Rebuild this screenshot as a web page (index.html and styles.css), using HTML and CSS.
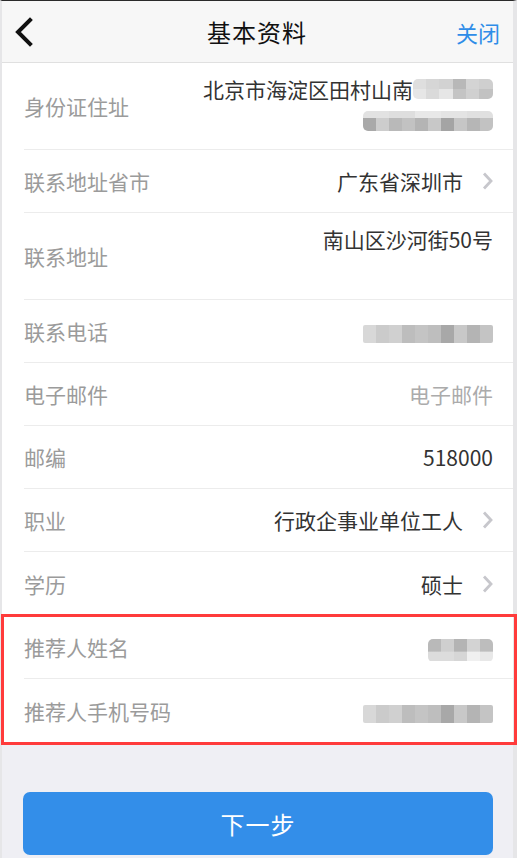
FILE: index.html
```html
<!DOCTYPE html>
<html lang="zh-CN">
<head>
    <meta charset="UTF-8" />
    <meta name="viewport" content="width=device-width, initial-scale=1.0"/>
    <title>基本资料</title>
    <link rel="stylesheet" href="styles.css">
</head>
<body>

<div class="screen">
    <header class="nav">
        <span class="nav-back">
            <svg width="20" height="30" viewBox="0 0 20 30">
                <path d="M16 3 L4 15 L16 27" fill="none" stroke="#111" stroke-width="4" stroke-linecap="square"/>
            </svg>
        </span>
        <h1 class="nav-title">基本资料</h1>
        <span class="nav-close">关闭</span>
    </header>

    <div class="form">
        <div class="row tall">
            <span class="label">身份证住址</span>
            <div class="value multi">
                <span class="line">北京市海淀区田村山南<i class="mosaic m-addr1"></i></span>
                <span class="line"><i class="mosaic m-addr2"></i></span>
            </div>
        </div>

        <div class="row">
            <span class="label">联系地址省市</span>
            <span class="value">广东省深圳市</span>
            <span class="chevron"></span>
        </div>

        <div class="row tall">
            <span class="label">联系地址</span>
            <div class="value multi">
                <span class="line">南山区沙河街50号</span>
            </div>
        </div>

        <div class="row">
            <span class="label">联系电话</span>
            <span class="value"><i class="mosaic m-phone"></i></span>
        </div>

        <div class="row">
            <span class="label">电子邮件</span>
            <span class="value placeholder">电子邮件</span>
        </div>

        <div class="row">
            <span class="label">邮编</span>
            <span class="value">518000</span>
        </div>

        <div class="row">
            <span class="label">职业</span>
            <span class="value">行政企事业单位工人</span>
            <span class="chevron"></span>
        </div>

        <div class="row last">
            <span class="label">学历</span>
            <span class="value">硕士</span>
            <span class="chevron"></span>
        </div>

        <!-- referrer fields, marked in red -->
        <div class="highlight">
            <div class="row">
                <span class="label">推荐人姓名</span>
                <span class="value"><i class="mosaic m-name"></i></span>
            </div>
            <div class="row last">
                <span class="label">推荐人手机号码</span>
                <span class="value"><i class="mosaic m-phone"></i></span>
            </div>
        </div>
    </div>

    <div class="footer">
        <button class="next-btn">下一步</button>
    </div>
</div>

</body>
</html>
```

FILE: styles.css
```css
* {
    box-sizing: border-box;
    font-family: "Noto Sans CJK SC", "Noto Sans", sans-serif;
}

body {
    margin: 0;
    background: #fff;
    overflow: hidden;
}

.screen {
    width: 517px;
    height: 858px;
    border-top: 1px solid #2a2a2a;
    border-left: 2px solid #e6e6e8;
    border-right: 4px solid #e6e6e8;
    background: #efeff4;
}

/* top bar */
.nav {
    height: 62px;
    display: flex;
    align-items: center;
    justify-content: space-between;
    padding: 0 13px 0 12px;
    background: #f7f7f7;
    border-bottom: 1px solid #e0e0e0;
}

.nav-back {
    width: 60px;
    display: flex;
    align-items: center;
}

.nav-back svg {
    display: block;
}

.nav-title {
    margin: 0;
    font-size: 24px;
    font-weight: normal;
    color: #111;
    letter-spacing: 1px;
}

.nav-close {
    width: 60px;
    text-align: right;
    font-size: 22px;
    color: #2f8de8;
}

/* list */
.form {
    background: #fff;
}

.row {
    display: flex;
    align-items: center;
    min-height: 63px;
    margin-left: 22px;
    padding-right: 20px;
    border-bottom: 1px solid #ececec;
    font-size: 21px;
}

.row.last {
    border-bottom: none;
}

.row.tall {
    min-height: 87px;
    align-items: stretch;
}

.row.tall .label {
    align-self: center;
}

.label {
    flex: none;
    color: #9b9b9b;
}

.value {
    flex: 1;
    text-align: right;
    color: #333;
}

.value.placeholder {
    color: #ababab;
}

.value.multi {
    display: flex;
    flex-direction: column;
    align-items: flex-end;
    padding-top: 10px;
}

.line {
    display: flex;
    align-items: center;
    height: 32px;
}

.chevron {
    flex: none;
    width: 11px;
    height: 18px;
    margin-left: 19px;
    background: no-repeat center / 11px 18px url("data:image/svg+xml;utf8,<svg xmlns='http://www.w3.org/2000/svg' width='11' height='18' viewBox='0 0 11 18'><path d='M2 1.5 L9 9 L2 16.5' fill='none' stroke='%23c7c7cc' stroke-width='2.8'/></svg>");
}

/* blurred personal data */
.mosaic {
    display: inline-block;
    height: 20px;
    border-radius: 5px;
    filter: blur(0.7px);
    vertical-align: middle;
}

.m-addr1 {
    width: 80px;
    background:
        linear-gradient(to right, #dedede 0 13px, #d6d6d6 13px 26px, #d2d2d2 26px 40px, #b8b8b8 40px 53px, #d4d4d4 53px 66px, #cfcfcf 66px) top / 100% 50% no-repeat,
        linear-gradient(to right, #e6e6e6 0 13px, #dadada 13px 26px, #e6e6e6 26px 40px, #c4c4c4 40px 53px, #d0d0d0 53px 66px, #c2c2c2 66px) bottom / 100% 50% no-repeat;
}

.m-addr2 {
    width: 130px;
    background:
        linear-gradient(to right, #e2e2e2 0 26px, #dedede 26px 52px, #e8e8e8 52px 78px, #e4e4e4 78px 104px, #e0e0e0 104px) top / 100% 35% no-repeat,
        linear-gradient(to right, #a9a9a9 0 13px, #cdcdcd 13px 26px, #b9b9b9 26px 39px, #c2c2c2 39px 52px, #b4b4b4 52px 65px, #c8c8c8 65px 78px, #a4a4a4 78px 91px, #c6c6c6 91px 104px, #b6b6b6 104px 117px, #c2c2c2 117px) bottom / 100% 65% no-repeat;
}

.m-phone {
    width: 130px;
    height: 18px;
    border-radius: 2px;
    background: linear-gradient(to right, #d8d8d8 0 13px, #cbcbcb 13px 26px, #d0d0d0 26px 39px, #bdbdbd 39px 52px, #c4c4c4 52px 65px, #bebebe 65px 78px, #a8a8a8 78px 91px, #c8c8c8 91px 104px, #b4b4b4 104px 117px, #c4c4c4 117px);
}

.m-name {
    width: 65px;
    height: 23px;
    background:
        linear-gradient(to right, #b9b9b9 0 13px, #cfcfcf 13px 26px, #b4b4b4 26px 39px, #d3d3d3 39px 52px, #bdbdbd 52px) top / 100% 55% no-repeat,
        linear-gradient(to right, #dcdcdc 0 26px, #d6d6d6 26px 39px, #f0f0f0 39px 52px, #e8e8e8 52px) bottom / 100% 45% no-repeat;
}

/* red annotation frame */
.highlight {
    position: relative;
    border-top: 1px solid #ececec;
}

.highlight::after {
    content: "";
    position: absolute;
    top: -2px;
    bottom: -3px;
    left: -1px;
    right: -4px;
    border: 3px solid #ff3b3b;
    pointer-events: none;
}

.footer {
    padding: 50px 20px 0 21px;
}

.next-btn {
    width: 100%;
    height: 63px;
    border: none;
    border-radius: 7px;
    background: #338ee9;
    color: #fff;
    font-size: 24px;
    letter-spacing: 1px;
}
```
